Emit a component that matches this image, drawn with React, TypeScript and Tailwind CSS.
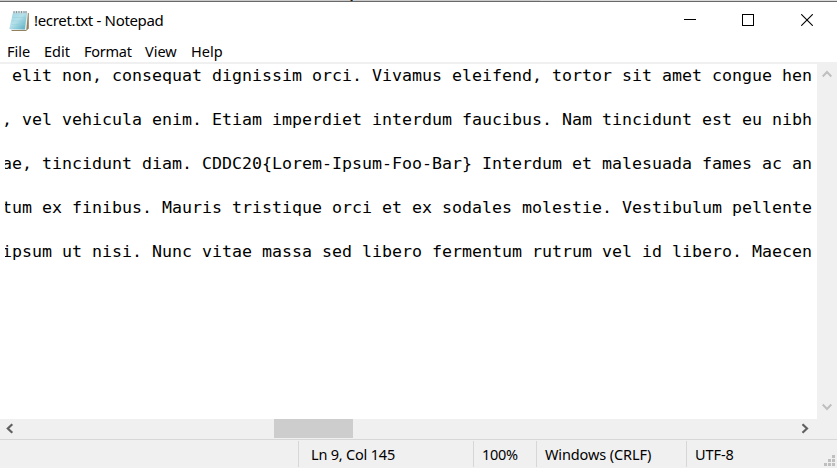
const lines = [
  ' elit non, consequat dignissim orci. Vivamus eleifend, tortor sit amet congue hen',
  ', vel vehicula enim. Etiam imperdiet interdum faucibus. Nam tincidunt est eu nibh',
  'ae, tincidunt diam. CDDC20{Lorem-Ipsum-Foo-Bar} Interdum et malesuada fames ac an',
  'tum ex finibus. Mauris tristique orci et ex sodales molestie. Vestibulum pellente',
  'ipsum ut nisi. Nunc vitae massa sed libero fermentum rutrum vel id libero. Maecen',
];

function NotepadIcon() {
  return (
    <svg width="20" height="22" viewBox="0 0 20 22" className="block shrink-0">
      <defs>
        <linearGradient id="page" x1="0" y1="0" x2="1" y2="1">
          <stop offset="0" stopColor="#9fd5e1" />
          <stop offset="0.45" stopColor="#b5e0ea" />
          <stop offset="1" stopColor="#4fa9bf" />
        </linearGradient>
      </defs>
      <path d="M4.5 3H19.8V18.5L17 21H2.5Z" fill="#94805f" />
      <path d="M4 2.5H19L17.3 20H1.5Z" fill="#e4eeee" />
      <path d="M4 2.5H18L15.8 19.5L0.3 19Z" fill="url(#page)" />
      <path d="M3.5 7.5H17M3 11H16.7M2.5 14.5H16.3" stroke="#8accd9" strokeWidth="0.4" />
      <path d="M4.5 2.2H18" stroke="#cfdadd" strokeWidth="2" />
      <path d="M5 1V3.2M7.5 1V3.2M10 1V3.2M12.5 1V3.2M15 1V3.2M17 1V3.2" stroke="#7e8d91" strokeWidth="0.9" />
    </svg>
  );
}

function TitleBar() {
  return (
    <header className="flex h-[37px] shrink-0 items-center bg-white pl-[9px]">
      <NotepadIcon />
      <span className="ml-[5px] w-[136px] whitespace-nowrap pb-px text-[15px] leading-5 tracking-[-0.33px]">!ecret.txt - Notepad</span>
      <div className="ml-auto flex items-center pb-px pr-[24px]">
        <svg width="12" height="12" viewBox="0 0 12 12" shapeRendering="crispEdges"><path d="M0 5.5H12" stroke="#000" /></svg>
        <svg width="12" height="12" viewBox="0 0 12 12" shapeRendering="crispEdges" className="ml-[46px]"><rect x=".5" y=".5" width="11" height="11" fill="none" stroke="#000" /></svg>
        <svg width="12" height="12" viewBox="0 0 12 12" className="ml-[47px]"><path d="M.2 .2L11.8 11.8M11.8 .2L.2 11.8" stroke="#000" strokeWidth="1.1" /></svg>
      </div>
    </header>
  );
}

function MenuBar() {
  return (
    <nav className="flex h-[25px] shrink-0 items-center border-b-2 border-[#f0f0f0] bg-white pl-[7px] text-[14.5px] leading-5">
      <span className="w-[37px]">File</span>
      <span className="w-[40px]">Edit</span>
      <span className="w-[61px] tracking-[-0.25px]">Format</span>
      <span className="w-[46px]">View</span>
      <span>Help</span>
    </nav>
  );
}

export default function App() {
  return (
    <div className="flex h-[468px] w-[837px] flex-col overflow-hidden bg-white font-['Noto_Sans','Open_Sans',sans-serif] text-black">
      <div className="flex h-[2px] shrink-0 border-b border-[#696969] bg-[#cacaca]">
        <i className="ml-[350px] w-px bg-[#b57828]" />
        <i className="w-px bg-[#151515]" />
        <i className="w-px bg-[#1c65a5]" />
        <i className="ml-[187px] grow bg-[#dadada]" />
      </div>
      <TitleBar />
      <MenuBar />
      <div className="flex h-[355px] shrink-0">
        <main className="w-[817px] pl-[5px]">
          <div className="overflow-hidden pt-px">
            <div className="-ml-[3px] flex flex-col gap-[22px] font-['DejaVu_Sans_Mono',monospace] text-[16.61px]">
              {lines.map((line) => (
                <p key={line} className="h-[22px] whitespace-pre leading-[22px]">{line}</p>
              ))}
            </div>
          </div>
        </main>
        <aside className="flex w-[20px] flex-col items-center justify-between bg-[#f0f0f0] pb-[8px] pt-[6px]">
          <svg width="10" height="8" viewBox="0 0 10 8"><path d="M.7 6.5L5 2L9.3 6.5" stroke="#bfbfbf" strokeWidth="2" fill="none" /></svg>
          <svg width="10" height="8" viewBox="0 0 10 8"><path d="M.7 1.5L5 6L9.3 1.5" stroke="#bfbfbf" strokeWidth="2" fill="none" /></svg>
        </aside>
      </div>
      <div className="flex h-[20px] shrink-0 bg-[#f0f0f0] pl-[5px]">
        <svg width="9" height="20" viewBox="0 0 9 20"><path d="M7.3 5.2L2.8 9.5L7.3 13.8" stroke="#606060" strokeWidth="2.2" fill="none" /></svg>
        <div className="ml-[260px] h-[19px] w-[79px] bg-[#cdcdcd]" />
        <svg width="8" height="20" viewBox="0 0 8 20" className="ml-auto mr-[28px]"><path d="M1.5 5.2L6 9.5L1.5 13.8" stroke="#606060" strokeWidth="2.2" fill="none" /></svg>
      </div>
      <footer className="flex h-[29px] shrink-0 border-t border-[#d7d7d7] bg-[#f0f0f0] pt-px text-[14.5px] leading-[27px]">
        <div className="w-[298px]" />
        <div className="h-[26px] w-[175px] border-l border-[#d7d7d7] pl-[12px] tracking-[-0.2px]">Ln 9, Col 145</div>
        <div className="h-[26px] w-[63px] border-l border-[#d7d7d7] pl-[8px] tracking-[-0.3px]">100%</div>
        <div className="h-[26px] w-[150px] border-l border-[#d7d7d7] pl-[8px] tracking-[-0.12px]">Windows (CRLF)</div>
        <div className="h-[26px] w-[138px] border-l border-[#d7d7d7] pl-[8px] tracking-[-0.1px]">UTF-8</div>
        <svg width="11" height="11" viewBox="0 0 11 11" className="mt-[14px] shrink-0" fill="#bfbfbf" shapeRendering="crispEdges">
          <path d="M8 0h3v3H8zM4 4h3v3H4zM8 4h3v3H8zM0 8h3v3H0zM4 8h3v3H4zM8 8h3v3H8z" />
        </svg>
      </footer>
    </div>
  );
}
